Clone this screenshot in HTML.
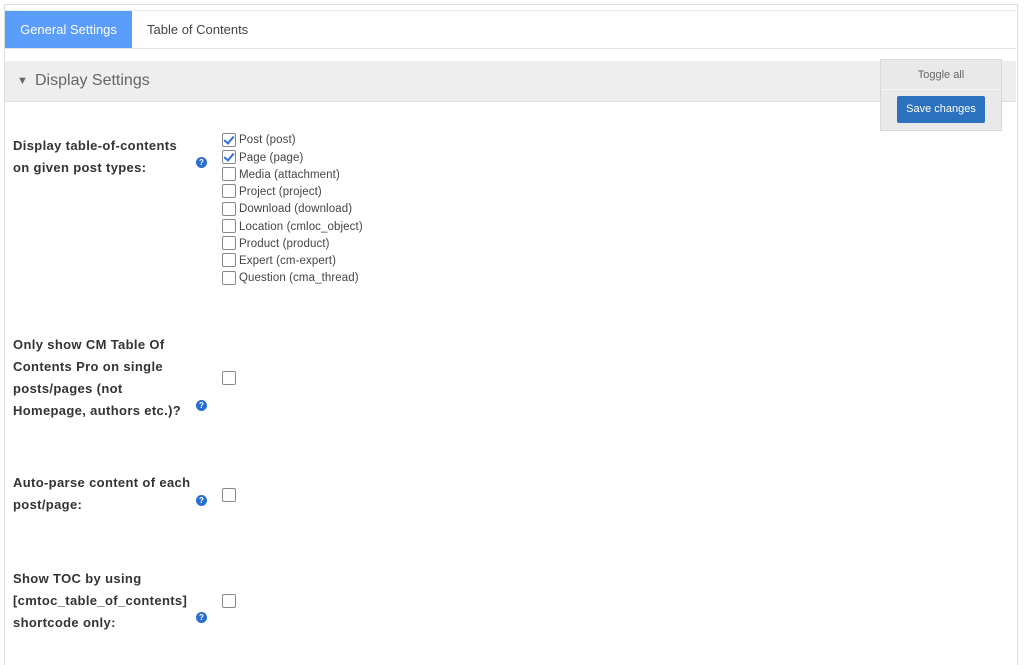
<!DOCTYPE html>
<html><head><style>
body{margin:0;width:1024px;height:650px;background:#fff;font-family:"Liberation Sans",sans-serif;overflow:hidden;position:relative}
.frame{position:absolute;left:4px;top:4px;width:1012px;height:660px;border:1px solid #ddd;border-bottom:none}
.tabs{position:absolute;left:5px;top:10px;width:1011px;height:37px;border-bottom:1px solid #e3e3e3;border-top:1px solid #e8e8e8}
.tab1{position:absolute;left:0;top:0;width:127px;height:37px;background:#5b9dfb;color:#fff;font-size:13px;line-height:37px;text-align:center}
.tab2{position:absolute;left:142px;top:0;line-height:37px;font-size:13px;color:#444}
.hdr{position:absolute;left:5px;top:61px;width:1011px;height:40px;background:#eee;border-bottom:1px solid #ddd;color:#666;font-size:16px;line-height:40px}
.hdr span{position:absolute;left:12px;font-size:11px}
.hdr b{position:absolute;left:30px;font-weight:normal}
.box{position:absolute;left:880px;top:59px;width:120px;height:70px;background:#e9e9e9;border:1px solid #d8d8d8}
.tog{position:absolute;top:0;width:120px;text-align:center;font-size:11px;color:#666;line-height:30px}
.sep{position:absolute;left:0;top:29px;width:120px;border-top:1px solid #f5f5f5}
.save{position:absolute;left:16px;top:36px;width:88px;height:27px;background:#2c71bd;border-radius:2px;color:#fff;font-size:11px;text-align:center;line-height:27px}
.lbl{position:absolute;left:13px;font-size:13px;font-weight:bold;color:#333;line-height:22px;letter-spacing:0.35px}
.help{position:absolute;left:196px;width:11px;height:11px;border-radius:50%;background:#2a6fd0;color:#fff;font-size:8px;font-weight:bold;text-align:center;line-height:11px}
.cb{position:absolute;left:222px;width:12px;height:12px;border:1px solid #888;border-radius:2px;background:#fff}
.cbt{position:absolute;left:239px;font-size:11.5px;color:#444;line-height:14px;letter-spacing:0.1px}
.chk::after{content:"";position:absolute;left:3px;top:0px;width:4px;height:8px;border:solid #2a6fd0;border-width:0 2px 2px 0;transform:rotate(40deg)}
</style></head><body>
<div class="frame"></div>
<div class="tabs"><div class="tab1">General Settings</div><div class="tab2">Table of Contents</div></div>
<div class="hdr"><span>▼</span><b>Display Settings</b></div>
<div class="box"><div class="tog">Toggle all</div><div class="sep"></div><div class="save">Save changes</div></div>

<div class="lbl" style="top:135px">Display table-of-contents<br>on given post types:</div>
<div class="help" style="top:157px">?</div>
<div class="cb chk" style="top:133px"></div><div class="cbt" style="top:133px">Post (post)</div>
<div class="cb chk" style="top:150px"></div><div class="cbt" style="top:151px">Page (page)</div>
<div class="cb" style="top:167px"></div><div class="cbt" style="top:168px">Media (attachment)</div>
<div class="cb" style="top:184px"></div><div class="cbt" style="top:185px">Project (project)</div>
<div class="cb" style="top:202px"></div><div class="cbt" style="top:202px">Download (download)</div>
<div class="cb" style="top:219px"></div><div class="cbt" style="top:220px">Location (cmloc_object)</div>
<div class="cb" style="top:236px"></div><div class="cbt" style="top:237px">Product (product)</div>
<div class="cb" style="top:253px"></div><div class="cbt" style="top:254px">Expert (cm-expert)</div>
<div class="cb" style="top:271px"></div><div class="cbt" style="top:271px">Question (cma_thread)</div>

<div class="lbl" style="top:334px">Only show CM Table Of<br>Contents Pro on single<br>posts/pages (not<br>Homepage, authors etc.)?</div>
<div class="help" style="top:400px">?</div>
<div class="cb" style="top:371px"></div>

<div class="lbl" style="top:472px">Auto-parse content of each<br>post/page:</div>
<div class="help" style="top:495px">?</div>
<div class="cb" style="top:488px"></div>

<div class="lbl" style="top:568px">Show TOC by using<br>[cmtoc_table_of_contents]<br>shortcode only:</div>
<div class="help" style="top:612px">?</div>
<div class="cb" style="top:594px"></div>
</body></html>
